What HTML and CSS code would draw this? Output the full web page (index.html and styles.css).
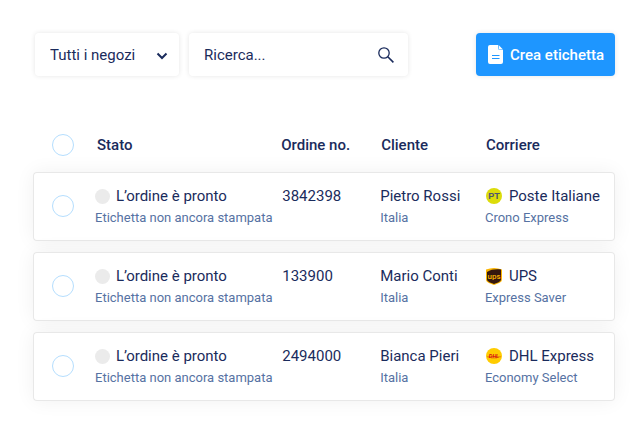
FILE: index.html
```html
<!DOCTYPE html>
<html lang="it">
<head>
    <meta charset="UTF-8">
    <meta name="viewport" content="width=device-width, initial-scale=1.0">
    <title>Ordini</title>
    <link rel="stylesheet" href="styles.css">
</head>
<body>
    <div class="container">
        <!-- Toolbar -->
        <div class="toolbar">
            <div class="field shop">
                <select id="shop" name="shop" aria-label="Negozio">
                    <option value="all">Tutti i negozi</option>
                </select>
                <svg class="chevron" width="12" height="8" viewBox="0 0 12 8" aria-hidden="true">
                    <path d="M1.500 1.500 6 6l4.500-4.500" fill="none" stroke="#1a2b5c" stroke-width="2"/>
                </svg>
            </div>
            <div class="field search">
                <input type="text" id="search" name="search" placeholder="Ricerca..." aria-label="Ricerca">
                <svg class="lens" width="16" height="16" viewBox="0 0 16 16" aria-hidden="true">
                    <circle cx="6" cy="6" r="5.200" fill="none" stroke="#1a2b5c" stroke-width="1.300"/>
                    <path d="M9.800 9.800 15.400 15.400" stroke="#1a2b5c" stroke-width="1.600"/>
                </svg>
            </div>
            <button type="button" class="create">
                <svg width="15" height="19" viewBox="0 0 15 19" aria-hidden="true">
                    <path d="M2 0h8v3a2 2 0 0 0 2 2h3v12a2 2 0 0 1-2 2H2a2 2 0 0 1-2-2V2a2 2 0 0 1 2-2z" fill="#fff"/>
                    <path d="M10.600 0 15 4.400h-3.400a1 1 0 0 1-1-1z" fill="#fff"/>
                    <path d="M4 10.500h7.500M4 13.500h7.500" stroke="#1e96ff" stroke-width="1.200"/>
                </svg>
                Crea etichetta
            </button>
        </div>

        <!-- Orders -->
        <table class="orders">
            <thead>
                <tr>
                    <th class="col-check"><input type="checkbox" aria-label="Seleziona tutti"></th>
                    <th class="col-status">Stato</th>
                    <th class="col-number">Ordine no.</th>
                    <th class="col-client">Cliente</th>
                    <th>Corriere</th>
                </tr>
            </thead>
            <tbody>
                <tr>
                    <td class="col-check"><input type="checkbox" aria-label="Seleziona ordine 3842398"></td>
                    <td>
                        <div class="main"><span class="dot"></span>L’ordine è pronto</div>
                        <div class="sub">Etichetta non ancora stampata</div>
                    </td>
                    <td class="number"><div class="main">3842398</div></td>
                    <td>
                        <div class="main">Pietro Rossi</div>
                        <div class="sub">Italia</div>
                    </td>
                    <td>
                        <div class="main carrier">
                            <svg width="16" height="16" viewBox="0 0 16 16" aria-hidden="true">
                                <circle cx="8" cy="8" r="8" fill="#dcdc0a"/>
                                <text x="8" y="11" text-anchor="middle" class="logo-pt">PT</text>
                            </svg>
                            Poste Italiane
                        </div>
                        <div class="sub">Crono Express</div>
                    </td>
                </tr>
                <tr>
                    <td class="col-check"><input type="checkbox" aria-label="Seleziona ordine 133900"></td>
                    <td>
                        <div class="main"><span class="dot"></span>L’ordine è pronto</div>
                        <div class="sub">Etichetta non ancora stampata</div>
                    </td>
                    <td class="number"><div class="main">133900</div></td>
                    <td>
                        <div class="main">Mario Conti</div>
                        <div class="sub">Italia</div>
                    </td>
                    <td>
                        <div class="main carrier">
                            <svg width="16" height="17" viewBox="0 0 16 17" aria-hidden="true">
                                <path d="M0 1.500Q8-1.500 16 1.500V11c0 3-2 3.800-8 6-6-2.200-8-3-8-6z" fill="#fbb400"/>
                                <path d="M1 4C5 1.300 10 .9 15 1.500V11c0 2.300-1.500 3-7 5-5.500-2-7-2.700-7-5z" fill="#35180f"/>
                                <text x="8" y="11" text-anchor="middle" class="logo-ups">ups</text>
                            </svg>
                            UPS
                        </div>
                        <div class="sub">Express Saver</div>
                    </td>
                </tr>
                <tr>
                    <td class="col-check"><input type="checkbox" aria-label="Seleziona ordine 2494000"></td>
                    <td>
                        <div class="main"><span class="dot"></span>L’ordine è pronto</div>
                        <div class="sub">Etichetta non ancora stampata</div>
                    </td>
                    <td class="number"><div class="main">2494000</div></td>
                    <td>
                        <div class="main">Bianca Pieri</div>
                        <div class="sub">Italia</div>
                    </td>
                    <td>
                        <div class="main carrier">
                            <svg width="16" height="16" viewBox="0 0 16 16" aria-hidden="true">
                                <circle cx="8" cy="8" r="8" fill="#fc0"/>
                                <path d="M1 8.800h14" stroke="#e0561a" stroke-width=".7"/>
                                <text x="8" y="9.500" text-anchor="middle" class="logo-dhl">DHL</text>
                                <path d="M5 10.300h6" stroke="#ee8a10" stroke-width=".7"/>
                            </svg>
                            DHL Express
                        </div>
                        <div class="sub">Economy Select</div>
                    </td>
                </tr>
            </tbody>
        </table>
    </div>
</body>
</html>
```
FILE: styles.css
```css
* {
    box-sizing: border-box;
}

body {
    margin: 0;
    background-color: #fff;
    color: #1a2b5c;
    font-family: Roboto, "Liberation Sans", sans-serif;
    font-size: 15px;
    line-height: 20px;
}

.container {
    padding: 33px 27px 20px 33px;
}

/* Toolbar */
.toolbar {
    display: flex;
    gap: 10px;
    padding-left: 2px;
}

.field {
    position: relative;
    height: 43px;
    border-radius: 4px;
    background-color: #fff;
    box-shadow: 0 0 5px rgba(0, 0, 0, 0.1);
}

.shop {
    flex: 0 1 144px;
}

.search {
    flex: 0 1 219px;
}

.field select,
.field input {
    width: 100%;
    height: 100%;
    margin: 0;
    padding: 0 15px;
    border: none;
    border-radius: 4px;
    outline: none;
    background: none;
    color: inherit;
    font: inherit;
    appearance: none;
}

.field input::placeholder {
    color: #1a2b5c;
    opacity: 1;
}

.chevron,
.lens {
    position: absolute;
    pointer-events: none;
}

.chevron {
    top: 19px;
    right: 11px;
}

.lens {
    top: 14px;
    right: 14px;
}

.create {
    display: flex;
    align-items: center;
    gap: 7px;
    height: 43px;
    margin-left: auto;
    padding: 0 11px 0 12px;
    border: none;
    border-radius: 4px;
    background-color: #1e96ff;
    box-shadow: 0 0 5px rgba(0, 0, 0, 0.1);
    color: #fff;
    font: inherit;
    font-weight: 500;
    white-space: nowrap;
    cursor: pointer;
}

/* Orders table */
.orders {
    width: 100%;
    margin-top: 42px;
    border-spacing: 0 11px;
    table-layout: fixed;
}

.orders th {
    height: 32px;
    padding: 0 1px;
    font-weight: 500;
    text-align: left;
}

.orders .col-check {
    width: 62px;
    padding: 0 0 0 19px;
}

.orders td.col-check {
    padding: 0 0 2px 18px;
}

.orders .col-status {
    width: 32%;
    padding-left: 2px;
}

.orders .col-number {
    width: 17%;
    padding-left: 0;
}

.col-client {
    width: 18%;
}

.orders tbody tr {
    border-radius: 4px;
    box-shadow: 0 0 20px rgba(0, 0, 0, 0.06);
}

.orders td {
    height: 69px;
    padding: 0;
    border: solid #e8e8e8;
    border-width: 1px 0;
    background-color: #fff;
    white-space: nowrap;
}

.orders td:first-child {
    border-left-width: 1px;
    border-radius: 4px 0 0 4px;
}

.orders td:last-child {
    border-right-width: 1px;
    border-radius: 0 4px 4px 0;
}

.orders td.number {
    padding: 13px 1px 0;
    vertical-align: top;
}

.orders input {
    display: block;
    width: 22px;
    height: 22px;
    margin: 0;
    border: 1px solid #b5defe;
    border-radius: 50%;
    appearance: none;
}

.orders input:checked {
    background-color: #1e96ff;
}

.main {
    display: flex;
    align-items: center;
    gap: 6px;
    line-height: 20px;
}

.carrier {
    gap: 7px;
}

.carrier svg {
    margin-left: 1px;
}

.dot {
    width: 15px;
    height: 15px;
    border-radius: 50%;
    background-color: #ebebeb;
}

.sub {
    margin-top: 3px;
    color: #5672a3;
    font-size: 13px;
    line-height: 18px;
}

/* Courier logos */
.logo-pt {
    fill: #4f5570;
    font: bold 9px "Liberation Sans", sans-serif;
}

.logo-ups {
    fill: #fbb400;
    font: 500 8px Roboto, sans-serif;
}

.logo-dhl {
    fill: #d40511;
    font: italic bold 5px "Liberation Sans", sans-serif;
}
```
